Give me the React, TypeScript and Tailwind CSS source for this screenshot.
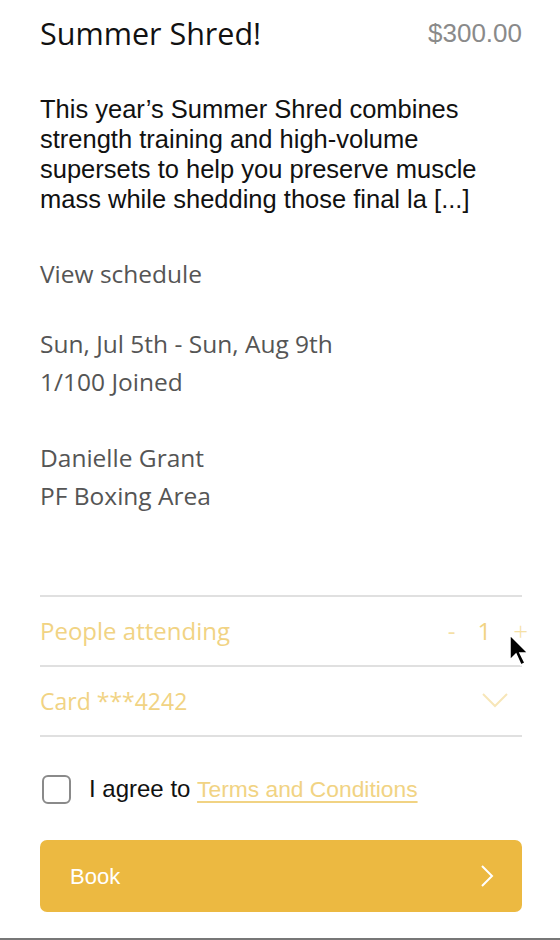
import { useState } from 'react';

const proxima = { fontFamily: '"Open Sans", "Liberation Sans", sans-serif' };
const helvetica = { fontFamily: '"Liberation Sans", Arial, sans-serif' };

export default function App() {
  const [count, setCount] = useState(1);
  const [agreed, setAgreed] = useState(false);

  return (
    <div className="relative w-[560px] h-[940px] bg-white overflow-hidden">
      <div className="pl-10 pr-[38px] pt-[16px]">
        <div className="flex items-center justify-between">
          <h1 className="text-[30.5px] leading-[34px] text-[#111]" style={proxima}>
            Summer Shred!
          </h1>
          <span className="text-[26px] leading-[34px] text-[#8a8a8a]" style={helvetica}>
            $300.00
          </span>
        </div>

        <p className="mt-[44px] text-[25.5px] leading-[30px] text-[#111]" style={helvetica}>
          This year’s Summer Shred combines strength training and high-volume supersets to help you
          preserve muscle mass while shedding those final la [...]
        </p>

        <div className="mt-[41px] text-[24.5px] leading-[38px] text-[#555]" style={proxima}>
          <div>View schedule</div>
          <div className="mt-[32px]">Sun, Jul 5th - Sun, Aug 9th</div>
          <div>1/100 Joined</div>
          <div className="mt-[38px]">Danielle Grant</div>
          <div>PF Boxing Area</div>
        </div>

        <div className="mt-[80px] border-t-2 border-[#e0e0e0]">
          <div
            className="h-[68px] flex items-center justify-between text-[24px] text-[#f1d383]"
            style={proxima}
          >
            <span>People attending</span>
            <div className="flex items-center gap-[22px] text-[#f5e0a5]">
              <button onClick={() => setCount(Math.max(1, count - 1))}>-</button>
              <span className="text-[#f1d383]">{count}</span>
              <button className="-mr-[6px] text-[26px] font-light" onClick={() => setCount(count + 1)}>
                +
              </button>
            </div>
          </div>
          <div
            className="h-[70px] border-t-2 border-[#e0e0e0] flex items-center justify-between text-[23px] text-[#f1d383]"
            style={proxima}
          >
            <span>Card ***4242</span>
            <svg className="mr-[14px]" width="26" height="16" viewBox="0 0 26 16" fill="none">
              <path d="M1 1l12 12L25 1" stroke="#f7e6b8" strokeWidth="2" />
            </svg>
          </div>
        </div>
        <div className="border-t-2 border-[#e0e0e0]" />

        <label className="mt-[34px] flex items-center gap-[18px] cursor-pointer" style={helvetica}>
          <input
            type="checkbox"
            checked={agreed}
            onChange={(e) => setAgreed(e.target.checked)}
            className="appearance-none w-[29px] h-[29px] ml-[2px] rounded-[6px] border-2 border-[#8a8a8a] bg-white"
          />
          <span className="text-[24px] text-[#111]">
            I agree to{' '}
            <a
              href="#"
              className="text-[22.8px] text-[#f1d383] underline underline-offset-[4px] decoration-[#f1d383]"
            >
              Terms and Conditions
            </a>
          </span>
        </label>

        <button
          className="mt-[33px] w-full h-[72px] rounded-[7px] bg-[#ecb941] flex items-center justify-between pl-[30px] pr-[28px] text-white text-[22px]"
          style={helvetica}
        >
          <span>Book</span>
          <svg width="14" height="24" viewBox="0 0 14 24" fill="none">
            <path d="M2 2l10 10L2 22" stroke="white" strokeWidth="2" />
          </svg>
        </button>
      </div>

      <div className="absolute bottom-0 left-0 right-0 h-[2px] bg-[#777]" />

      {/* mouse pointer */}
      <svg className="absolute left-[509px] top-[634px]" width="22" height="34" viewBox="0 0 22 34">
        <path d="M1 1v25l6-6 5 11 4-2-5-10h8z" fill="black" stroke="white" strokeWidth="1.5" />
      </svg>
    </div>
  );
}
